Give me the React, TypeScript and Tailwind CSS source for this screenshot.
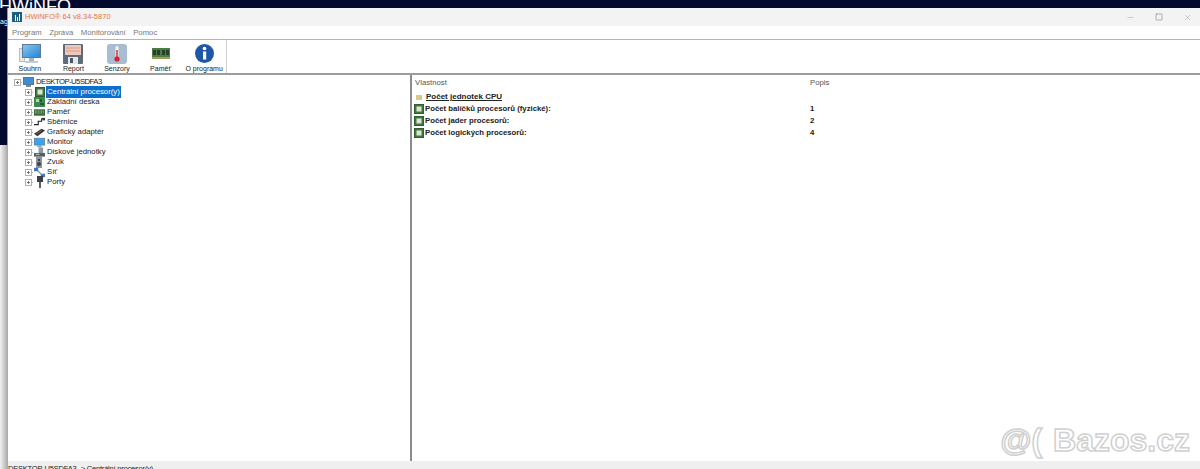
// HWiNFO window screenshot

import React from 'react';
import { Minus, Square, X } from 'lucide-react';

const Chip: React.FC = () => (
  <svg width="10" height="10" viewBox="0 0 10 10" className="shrink-0">
    <rect x="0.5" y="0.5" width="9" height="9" fill="#3f7a3c" stroke="#2f5e30" />
    <rect x="2.5" y="2.5" width="5" height="5" fill="#dfe4d2" />
  </svg>
);

const Expander: React.FC = () => (
  <svg width="9" height="7" viewBox="0 0 9 7" className="shrink-0">
    <rect x="0.5" y="0.5" width="6" height="6" fill="#fff" stroke="#b0b0b0" />
    <path d="M2 3.5h3M3.5 2v3" stroke="#777" />
    <path d="M7 3.5h2" stroke="#b0b0b0" strokeDasharray="1 1" />
  </svg>
);

const treeIcons: Record<string, React.ReactNode> = {
  cpu: <Chip />,
  board: (
    <svg width="11" height="10" viewBox="0 0 11 10">
      <rect width="11" height="10" fill="#3d8a4c" />
      <rect x="2" y="2" width="3" height="3" fill="#b8d8b0" />
      <path d="M6 7h4M7 2v3" stroke="#123" />
    </svg>
  ),
  ram: (
    <svg width="12" height="7" viewBox="0 0 12 7">
      <rect width="12" height="7" fill="#3a6a3a" />
      <path d="M1 2h10M1 4h10" stroke="#9bc09b" strokeDasharray="2 1" />
    </svg>
  ),
  bus: (
    <svg width="13" height="11" viewBox="0 0 13 11" fill="none">
      <path d="M0 8h5V4h4V1h3" stroke="#222" strokeWidth="1.3" />
      <rect x="10" y="0" width="3" height="3" fill="#333" />
    </svg>
  ),
  gpu: (
    <svg width="13" height="9" viewBox="0 0 13 9">
      <path d="M0 6 9 0l4 2-9 7z" fill="#3a3230" />
      <path d="M3 6l6-4" stroke="#8a7a70" />
    </svg>
  ),
  monitor: (
    <svg width="13" height="11" viewBox="0 0 13 11">
      <rect x="0.5" y="0.5" width="12" height="8" fill="#36a4ee" stroke="#5b86a8" />
      <rect x="4" y="9" width="5" height="2" fill="#8aa0b0" />
    </svg>
  ),
  disk: (
    <svg width="12" height="11" viewBox="0 0 12 11">
      <rect x="5" y="0" width="5" height="6" fill="#8c9aa8" />
      <rect x="0" y="6" width="12" height="4" fill="#555d66" />
      <rect x="2" y="7" width="4" height="1" fill="#d0d0d0" />
    </svg>
  ),
  sound: (
    <svg width="10" height="11" viewBox="0 0 10 11">
      <rect x="1" y="0" width="6" height="11" fill="#8a939c" />
      <circle cx="4" cy="7" r="2" fill="#3c434a" />
      <rect x="3" y="2" width="2" height="2" fill="#3c434a" />
    </svg>
  ),
  net: (
    <svg width="13" height="11" viewBox="0 0 13 11">
      <rect x="0" y="0" width="5" height="4" fill="#3f74c0" />
      <rect x="8" y="7" width="5" height="4" fill="#3f74c0" />
      <path d="M4 3l5 5" stroke="#7a8896" strokeWidth="1.5" />
    </svg>
  ),
  port: (
    <svg width="8" height="12" viewBox="0 0 8 12">
      <rect x="1" y="0" width="6" height="6" fill="#3c4046" />
      <rect x="3" y="6" width="2" height="6" fill="#5a6068" />
    </svg>
  ),
};

const treeItems = [
  { label: 'Centrální procesor(y)', icon: 'cpu', selected: true },
  { label: 'Základní deska', icon: 'board' },
  { label: 'Paměť', icon: 'ram' },
  { label: 'Sběrnice', icon: 'bus' },
  { label: 'Grafický adaptér', icon: 'gpu' },
  { label: 'Monitor', icon: 'monitor' },
  { label: 'Diskové jednotky', icon: 'disk' },
  { label: 'Zvuk', icon: 'sound' },
  { label: 'Síť', icon: 'net' },
  { label: 'Porty', icon: 'port' },
];

const tools: { label: string; icon: React.ReactNode }[] = [
  {
    label: 'Souhrn',
    icon: (
      <svg width="22" height="20" viewBox="0 0 22 20">
        <defs>
          <linearGradient id="screen" x1="0" y1="0" x2="1" y2="1">
            <stop offset="0" stopColor="#8cc8f0" />
            <stop offset="1" stopColor="#1f84d8" />
          </linearGradient>
        </defs>
        <rect x="0.5" y="4.5" width="5" height="13" fill="#e4e8ec" stroke="#b4bcc4" />
        <rect x="3.5" y="0.5" width="18" height="13" fill="url(#screen)" stroke="#5c7a92" />
        <rect x="10" y="14" width="5" height="3" fill="#a9b4bc" />
        <rect x="6" y="17" width="13" height="2" fill="#c4ccd2" />
      </svg>
    ),
  },
  {
    label: 'Report',
    icon: (
      <svg width="20" height="20" viewBox="0 0 20 20">
        <rect width="20" height="20" rx="1" fill="#5d6b7c" />
        <rect x="2" y="1" width="16" height="10" fill="#f0c8b8" />
        <path d="M3 4h14M3 7h14" stroke="#d89c8c" />
        <rect x="5" y="13" width="10" height="7" fill="#e4e8ec" />
        <rect x="7" y="14" width="3" height="5" fill="#4c5866" />
      </svg>
    ),
  },
  {
    label: 'Senzory',
    icon: (
      <svg width="20" height="20" viewBox="0 0 20 20">
        <rect width="20" height="20" rx="3" fill="#a9bdd2" />
        <rect x="8.5" y="2" width="3" height="11" rx="1.5" fill="#f4f4f4" />
        <rect x="9.3" y="6" width="1.4" height="8" fill="#d8202a" />
        <circle cx="10" cy="15" r="2.6" fill="#d8202a" />
      </svg>
    ),
  },
  {
    label: 'Paměť',
    icon: (
      <svg width="18" height="11" viewBox="0 0 18 11">
        <rect width="18" height="11" fill="#4c7a48" />
        <rect x="1" y="2" width="3" height="5" fill="#26402a" />
        <rect x="5" y="2" width="3" height="5" fill="#26402a" />
        <rect x="10" y="2" width="3" height="5" fill="#26402a" />
        <rect x="14" y="2" width="3" height="5" fill="#26402a" />
        <rect y="9" width="18" height="2" fill="#a89c50" />
      </svg>
    ),
  },
  {
    label: 'O programu',
    icon: (
      <svg width="19" height="19" viewBox="0 0 19 19">
        <circle cx="9.5" cy="9.5" r="9.5" fill="#1f57a8" />
        <circle cx="9.5" cy="4.5" r="1.8" fill="#fff" />
        <rect x="8" y="7.5" width="3.2" height="8" fill="#fff" />
      </svg>
    ),
  },
];

export default function App() {
  return (
    <div className="relative flex h-[469px] w-[1200px] flex-col overflow-hidden bg-white font-['Liberation_Sans',sans-serif] text-[7.75px] text-[#222]">
      {/* page behind the window */}
      <div className="h-2 shrink-0 overflow-hidden bg-[#020a2e]">
        <div className="-ml-px -mt-[3px] text-[18px] leading-[18px] text-white">HWiNFO</div>
      </div>

      <div className="flex min-h-0 flex-1">
        <div className="flex w-2 shrink-0 flex-col">
          <div className="h-[137px] overflow-hidden border-r border-[#9a9a9a] bg-[#020a2e] pt-[10px] text-[7px] leading-[8px] text-white">ag</div>
          <div className="flex-1 bg-gradient-to-r from-[#f2f2f2] to-[#a8a8a8]" />
        </div>

        {/* window */}
        <div className="flex min-w-0 flex-1 flex-col bg-white">
          <div className="flex h-[18px] shrink-0 items-center bg-[#f3f3f3] pl-1">
            <div className="mr-[3px] flex h-[10px] w-[10px] items-end justify-center gap-px bg-[#1d5f80] pb-px">
              <span className="h-[6px] w-px bg-white" />
              <span className="h-[4px] w-px bg-white" />
              <span className="h-[7px] w-px bg-white" />
            </div>
            <span className="text-[7.5px] font-medium text-[#e8763a]">HWiNFO® 64 v8.34-5870</span>
            <div className="ml-auto flex items-center gap-[20px] pr-[8px] text-[#888]">
              <Minus size={9} strokeWidth={1} />
              <Square size={8} strokeWidth={1.4} className="text-[#666]" />
              <X size={9} strokeWidth={1} />
            </div>
          </div>

          <div className="flex h-[14px] shrink-0 items-center gap-[7.5px] border-b border-[#b4b4b4] pl-1 text-[#777]">
            <span>Program</span>
            <span>Zpráva</span>
            <span>Monitorování</span>
            <span>Pomoc</span>
          </div>

          <div className="flex h-[35px] shrink-0 border-b-2 border-[#9c9c9c]">
            <div className="flex w-[219px] border-r border-[#d0d0d0]">
              {tools.map(tool => (
                <div key={tool.label} className="flex w-[44px] flex-col items-center">
                  <div className="flex h-[24px] items-center justify-center pt-[3px]">{tool.icon}</div>
                  <span className="whitespace-nowrap text-[7px] leading-[9px]">{tool.label}</span>
                </div>
              ))}
            </div>
          </div>

          <div className="flex min-h-0 flex-1">
            <div className="flex w-[404px] shrink-0 flex-col border-r-2 border-[#8c8c8c] pl-[6px] pt-[2px]">
              <div className="flex h-[10px] items-center">
                <Expander />
                <svg width="11" height="10" viewBox="0 0 11 10">
                  <rect x="0.5" y="0.5" width="10" height="7" fill="#3b8fd8" stroke="#5b7890" />
                  <rect x="3" y="8" width="5" height="2" fill="#7b8a96" />
                </svg>
                <span className="ml-[2px] whitespace-nowrap tracking-[-0.55px]">DESKTOP-U5SDFA3</span>
              </div>
              {treeItems.map(item => (
                <div key={item.label} className="flex h-[10px] items-center pl-[11px]">
                  <Expander />
                  <span className="flex w-[11px] justify-center">{treeIcons[item.icon]}</span>
                  <span
                    className={
                      item.selected
                        ? 'ml-px whitespace-nowrap bg-[#0b6fd0] px-px text-white'
                        : 'ml-px whitespace-nowrap px-px'
                    }
                  >
                    {item.label}
                  </span>
                </div>
              ))}
            </div>

            <div className="flex min-w-0 flex-1 flex-col pl-[2px]">
              <div className="flex h-[16px] shrink-0 items-center text-[#555]">
                <span className="w-[396px] pl-px">Vlastnost</span>
                <span>Popis</span>
              </div>
              <div className="flex h-[12px] items-center gap-[4px] pl-[2px] text-[8px] font-bold">
                <span className="h-[5px] w-[6px] bg-[#d8c88a]" />
                <span className="underline">Počet jednotek CPU</span>
              </div>
              {[
                ['Počet balíčků procesorů (fyzické):', '1'],
                ['Počet jader procesorů:', '2'],
                ['Počet logických procesorů:', '4'],
              ].map(([name, value]) => (
                <div key={name} className="flex h-[12px] items-center font-bold">
                  <span className="flex w-[396px] items-center gap-px">
                    <Chip />
                    {name}
                  </span>
                  <span>{value}</span>
                </div>
              ))}
            </div>
          </div>

          <div className="flex h-2 shrink-0 items-start overflow-hidden bg-[#efefef]">
            <span className="whitespace-nowrap pt-[3px] text-[7.5px] leading-[9px] tracking-[-0.2px]">DESKTOP-U5SDFA3 -&gt; Centrální procesor(y)</span>
          </div>
        </div>
      </div>

      {/* bazos watermark */}
      <div className="absolute bottom-[13px] right-[10px] flex items-baseline gap-[11px] text-[32px] font-bold leading-none text-white [-webkit-text-stroke:1.5px_#d0d0d0]">
        <span>@(</span>
        <span>Bazos.cz</span>
      </div>
    </div>
  );
}
